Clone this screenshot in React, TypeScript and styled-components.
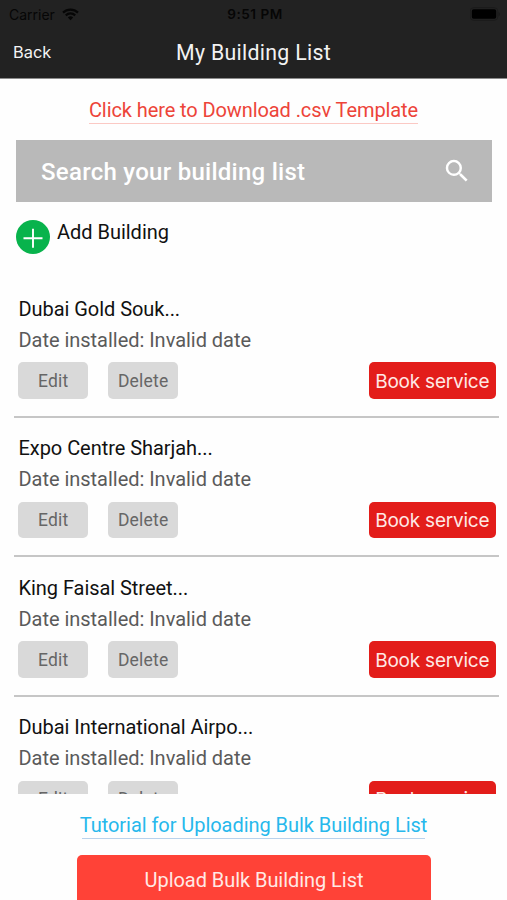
import React from "react";
import styled, { createGlobalStyle } from "styled-components";

const GlobalStyle = createGlobalStyle`
  * { box-sizing: border-box; }
  body { margin: 0; background: #fff; overflow: hidden; }
  button { border: 0; margin: 0; cursor: pointer; }
`;

const Screen = styled.div`
  width: 507px;
  height: 900px;
  overflow: hidden;
  display: flex;
  flex-direction: column;
  background: #fefefe;
  font-family: Roboto, "Liberation Sans", sans-serif;
  color: #111;
  white-space: nowrap;
`;

const Header = styled.header`
  height: 79px;
  flex: none;
  background: #222;
  border-bottom: 1px solid #8b8b8b;
`;

const StatusBar = styled.div`
  height: 27px;
  display: grid;
  grid-template-columns: 1fr auto 1fr;
  align-items: center;
  padding: 0 6px 0 9px;
  font: 400 14px/27px Inter, "Liberation Sans", sans-serif;
  color: #060606;
`;

const Carrier = styled.div`
  display: flex;
  align-items: center;
  gap: 7px;
`;

const Clock = styled.div`
  font-weight: 600;
  font-size: 13.6px;
  line-height: 28px;
  letter-spacing: 0.5px;
`;

const BatterySlot = styled.div`
  display: flex;
  justify-content: flex-end;
`;

const NavBar = styled.nav`
  height: 51px;
  display: grid;
  grid-template-columns: 1fr auto 1fr;
  align-items: center;
  padding: 0 13px;
`;

const BackButton = styled.button`
  justify-self: start;
  padding: 0 0 2px;
  background: none;
  color: #f4f4f4;
  font: 400 16.4px/48px Inter, sans-serif;
`;

const Title = styled.h1`
  margin: 0;
  color: #f2f2f2;
  font-size: 21.3px;
  font-weight: 400;
  line-height: 50px;
  letter-spacing: 0.3px;
`;

const TextLink = styled.a<{ $tone: string; $line: string }>`
  align-self: center;
  flex: none;
  height: 27px;
  color: ${(p) => p.$tone};
  background: linear-gradient(${(p) => p.$line}, ${(p) => p.$line}) no-repeat 50% 100% / calc(100% - 4px) 1px;
  font-size: 20px;
  line-height: 26px;
  letter-spacing: -0.05px;
`;

const DownloadLink = styled(TextLink)`
  margin-top: 18px;
  letter-spacing: -0.09px;
  background-size: 100% 1px;
`;

const SearchBar = styled.div`
  flex: none;
  display: flex;
  align-items: center;
  justify-content: space-between;
  width: 476px;
  height: 62px;
  margin: 16px 0 0 16px;
  padding: 0 20px 0 25px;
  background: #b9b9b9;
  color: #fff;
  font-size: 24px;
  font-weight: 500;
  line-height: 62px;
  letter-spacing: 0.27px;
`;

const SearchText = styled.span`
  padding-top: 2px;
`;

const AddRow = styled.div`
  flex: none;
  display: flex;
  height: 76px;
  padding: 18px 0 0 16px;
  gap: 7px;
`;

const AddLabel = styled.span`
  font-size: 20px;
  line-height: 24px;
  letter-spacing: -0.02px;
`;

const List = styled.div`
  flex: none;
  height: 516px;
  overflow: hidden;
  padding: 0 8px 0 14px;
`;

const Row = styled.article`
  height: 139.5px;
  padding: 15.5px 3.5px 0 4.5px;
  border-bottom: 2px solid #c6c6c6;
`;

const Line = styled.div<{ $muted?: boolean }>`
  color: ${(p) => (p.$muted ? "#5a5a5a" : "#111")};
  font-size: 20px;
  line-height: 31px;
  letter-spacing: ${(p) => (p.$muted ? "-0.03px" : "-0.05px")};
`;

const Actions = styled.div`
  display: flex;
  gap: 20px;
  margin: 6.5px 0 0 -0.3px;
`;

const SmallButton = styled.button`
  width: 70px;
  height: 36.5px;
  padding: 1.5px 0 0;
  border-radius: 5px;
  background: #d9d9d9;
  color: #666;
  font: 400 17.5px/35px Roboto, sans-serif;
  letter-spacing: 0.2px;
`;

const BookButton = styled(SmallButton)`
  width: 126.5px;
  margin-left: auto;
  background: #e31d1a;
  color: #ffe9e5;
  font: 400 19px/35px Inter, sans-serif;
  letter-spacing: -0.23px;
`;

const TutorialLink = styled(TextLink)`
  margin-top: 18px;
`;

const UploadButton = styled.button`
  flex: none;
  align-self: center;
  width: 354px;
  height: 52px;
  margin: 16px 0 0 1px;
  padding: 0 0 2px;
  border-radius: 5px;
  background: #ff4237;
  color: #ffe9e5;
  font: 400 20px/50px Roboto, sans-serif;
  letter-spacing: -0.05px;
`;

const buildings = [
  "Dubai Gold Souk...",
  "Expo Centre Sharjah...",
  "King Faisal Street...",
  "Dubai International Airpo...",
];

const WifiIcon = () => (
  <svg width="17" height="13" viewBox="0 0 17 13" fill="none" stroke="#060606" strokeWidth="2.2">
    <path d="M1 4.6a10.7 10.7 0 0 1 15 0M3.8 7.4a6.7 6.7 0 0 1 9.4 0" />
    <path d="M8.5 12.3L5.8 9.5a3.9 3.9 0 0 1 5.4 0z" fill="#060606" stroke="none" />
  </svg>
);

const BatteryIcon = () => (
  <svg width="31" height="14" viewBox="0 0 31 14">
    <rect x="0.2" y="0.7" width="27.6" height="12.6" rx="3.5" fill="none" stroke="#1b1b1b" />
    <rect x="1.8" y="2.3" width="24.4" height="9.4" rx="1.8" fill="#000" />
    <path d="M28.7 5v4.2c1.3-.5 1.3-3.7 0-4.2z" fill="#171717" />
  </svg>
);

const SearchIcon = () => (
  <svg width="30" height="30" viewBox="0 0 24 24" fill="#fff">
    <path d="M15.5 14h-.79l-.28-.27A6.471 6.471 0 0 0 16 9.5 6.5 6.5 0 1 0 9.5 16c1.61 0 3.09-.59 4.23-1.57l.27.28v.79l5 4.99L20.49 19l-4.99-5zm-6 0C7.01 14 5 11.99 5 9.5S7.01 5 9.5 5 14 7.01 14 9.5 11.99 14 9.5 14z" />
  </svg>
);

const AddIcon = () => (
  <svg width="34" height="34" viewBox="0 0 34 34">
    <circle cx="17" cy="17" r="17" fill="#08b34c" />
    <path d="M7.5 18.2h19M17 8.7v19" stroke="#fff" strokeWidth="1.9" />
  </svg>
);

export default function App() {
  return (
    <Screen>
      <GlobalStyle />
      <Header>
        <StatusBar>
          <Carrier>
            Carrier
            <WifiIcon />
          </Carrier>
          <Clock>9:51 PM</Clock>
          <BatterySlot>
            <BatteryIcon />
          </BatterySlot>
        </StatusBar>
        <NavBar>
          <BackButton>Back</BackButton>
          <Title>My Building List</Title>
        </NavBar>
      </Header>
      <DownloadLink $tone="#ed4439" $line="#fbc9c4">
        Click here to Download .csv Template
      </DownloadLink>
      <SearchBar>
        <SearchText>Search your building list</SearchText>
        <SearchIcon />
      </SearchBar>
      <AddRow>
        <AddIcon />
        <AddLabel>Add Building</AddLabel>
      </AddRow>
      <List>
        {buildings.map((name) => (
          <Row key={name}>
            <Line>{name}</Line>
            <Line $muted>Date installed: Invalid date</Line>
            <Actions>
              <SmallButton>Edit</SmallButton>
              <SmallButton>Delete</SmallButton>
              <BookButton>Book service</BookButton>
            </Actions>
          </Row>
        ))}
      </List>
      <TutorialLink $tone="#27b8ec" $line="#b9d2ec">
        Tutorial for Uploading Bulk Building List
      </TutorialLink>
      <UploadButton>Upload Bulk Building List</UploadButton>
    </Screen>
  );
}
